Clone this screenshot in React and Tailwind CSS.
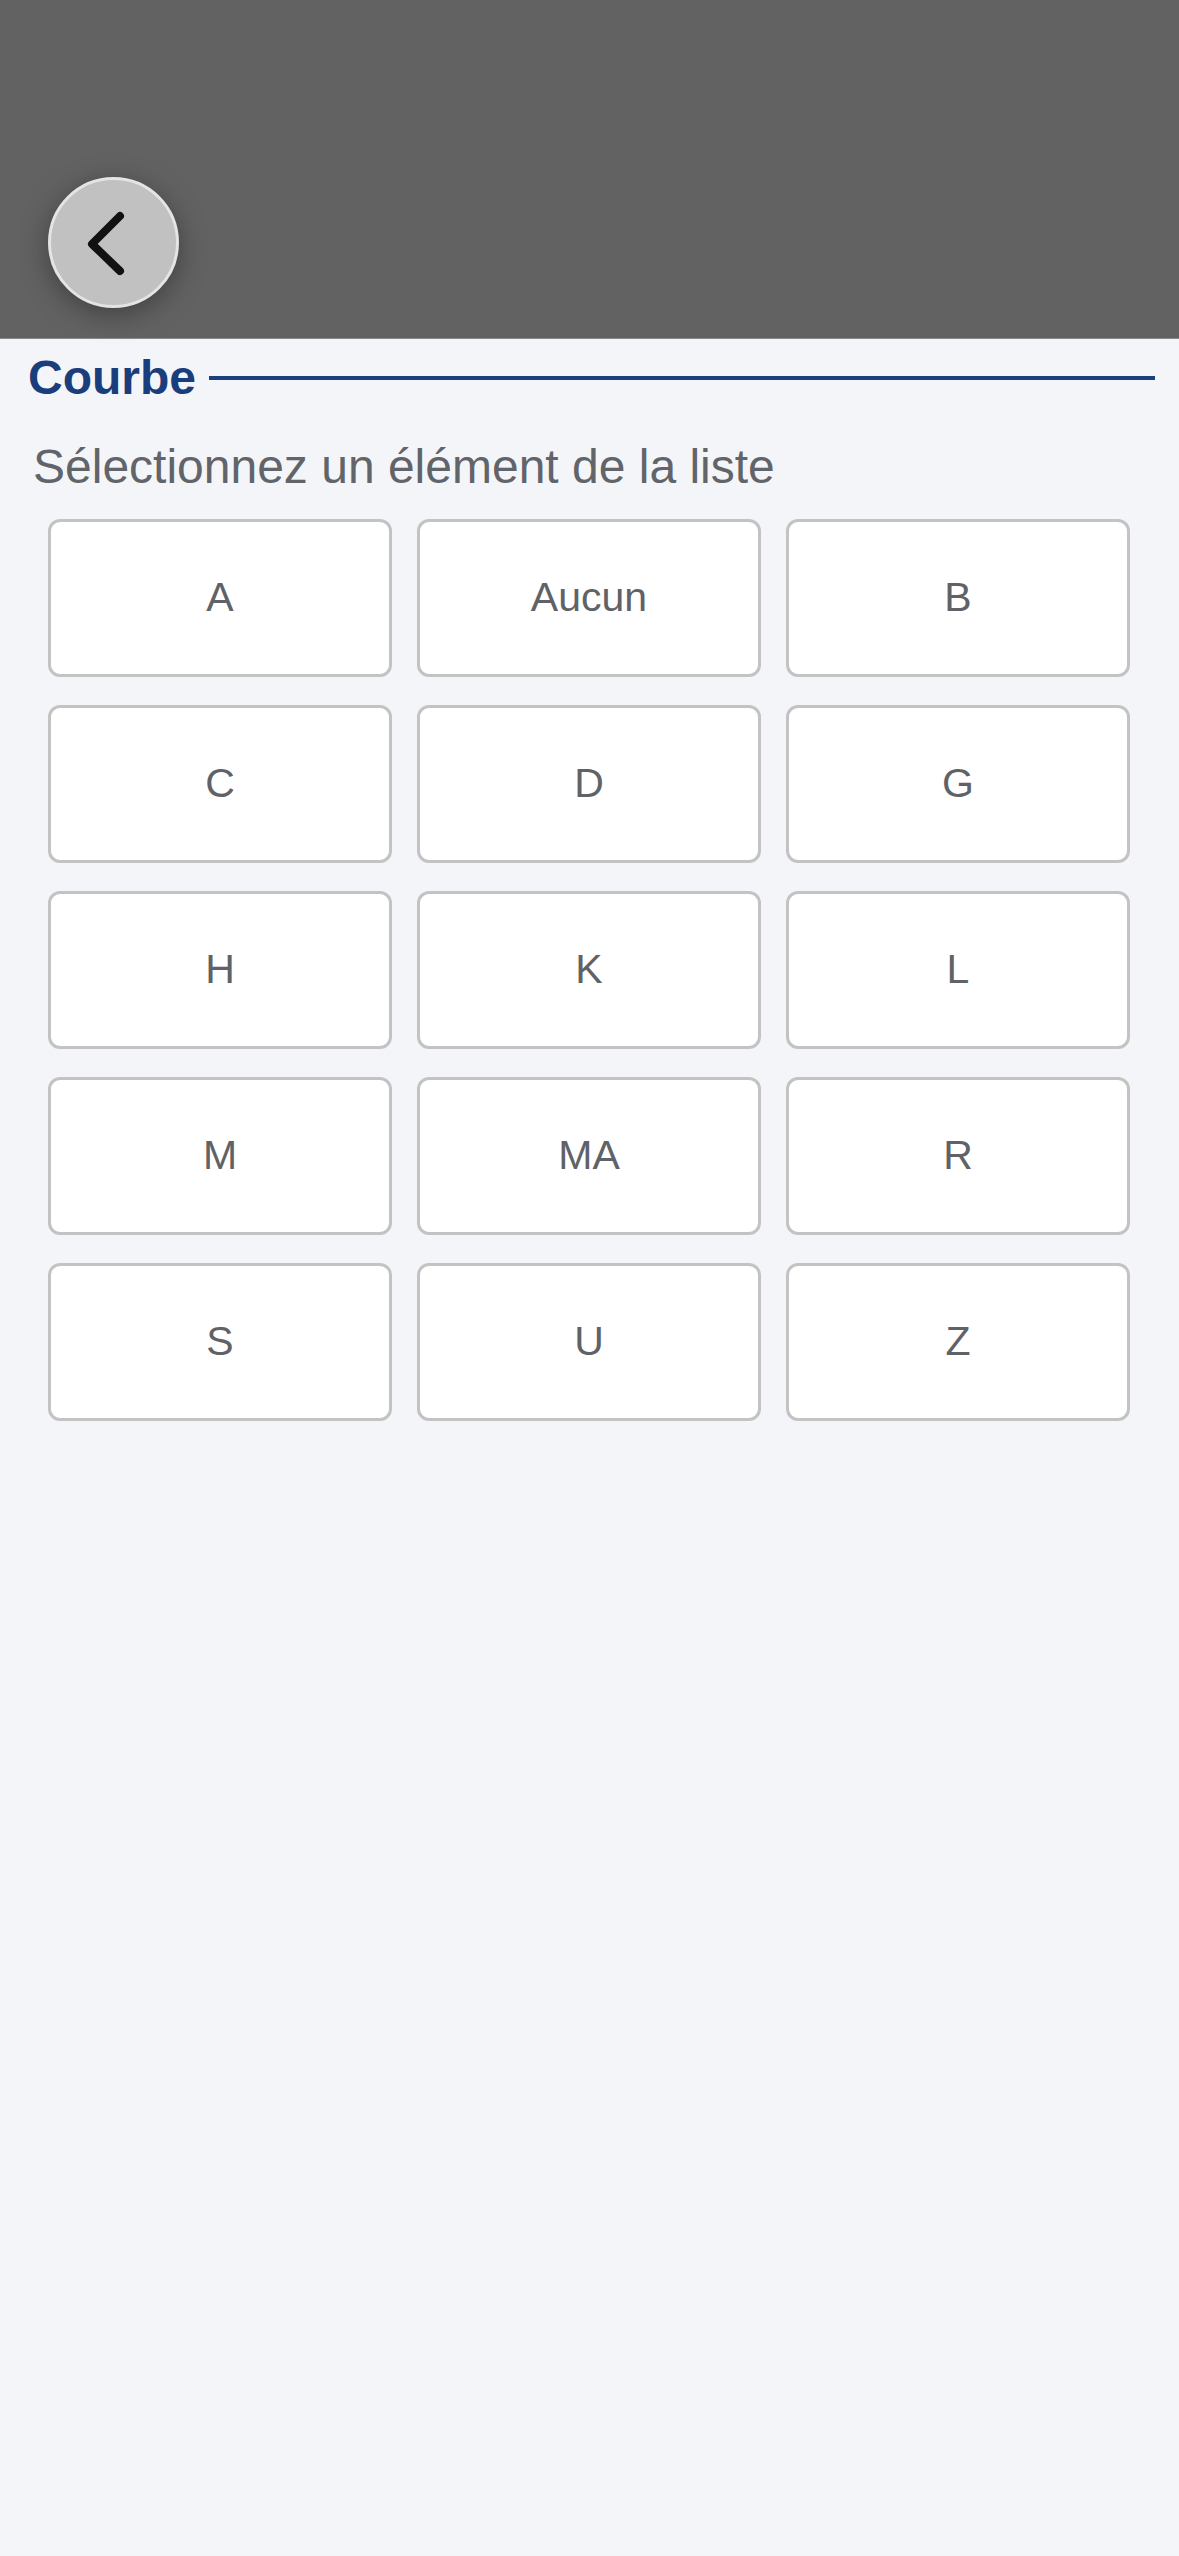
import React from "react";

const items = ["A", "Aucun", "B", "C", "D", "G", "H", "K", "L", "M", "MA", "R", "S", "U", "Z"];

function BackButton() {
  return (
    <button className="w-[131px] h-[131px] rounded-full bg-[#c1c1c1] border-[3px] border-[#e4e4e4] shadow-[0_6px_28px_rgba(0,0,0,0.35)] flex items-center justify-center">
      <svg width="50" height="70" viewBox="0 0 50 70" className="ml-[-10px]">
        <path
          d="M36 8 L8 36 L36 63"
          fill="none"
          stroke="#111"
          strokeWidth="8"
          strokeLinecap="round"
          strokeLinejoin="round"
        />
      </svg>
    </button>
  );
}

export default function App() {
  return (
    <div className="min-h-screen bg-[#f4f5f9] font-['Liberation_Sans',Arial,sans-serif]">
      {/* Header */}
      <div className="h-[339px] bg-[#626262] border-b border-[#8a8a8a] pt-[177px] pl-[48px]">
        <BackButton />
      </div>

      {/* Section title */}
      <div className="flex items-center mt-[15px] pl-[28px] pr-[24px]">
        <h2 className="text-[48px] leading-[48px] font-bold text-[#1a3d7c]">Courbe</h2>
        <div className="flex-1 h-[4px] bg-[#1c3f7e] ml-[13px] mt-[-1px]" />
      </div>

      <p className="mt-[41px] pl-[33px] text-[48px] leading-[47px] text-[#616469]">
        Sélectionnez un élément de la liste
      </p>

      {/* Options */}
      <div className="grid grid-cols-3 gap-x-[25px] gap-y-[28px] mt-[29px] pl-[48px] pr-[49px]">
        {items.map((it) => (
          <button
            key={it}
            className="h-[158px] bg-white rounded-[12px] border-[3px] border-[#c3c3c3] flex items-center justify-center text-[41px] text-[#5f6266]"
          >
            {it}
          </button>
        ))}
      </div>
    </div>
  );
}
